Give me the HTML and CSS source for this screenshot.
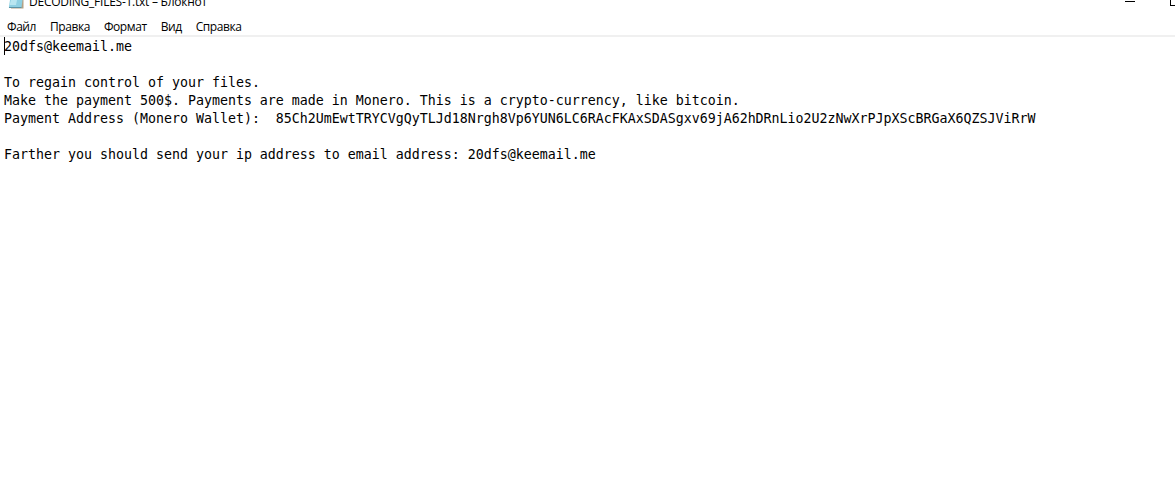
FILE: index.html
```
<!DOCTYPE html>
<html lang="ru">
<head>
    <meta charset="UTF-8">
    <title>Блокнот</title>
    <link rel="stylesheet" href="styles.css">
</head>
<body>
    <div class="window">
        <div class="titlebar">
            <svg class="icon" width="16" height="9" viewBox="0 0 16 9">
                <path d="M2 0H15.5V8.5H3Z" fill="#b5a184"/>
                <path d="M2 0H14.5L13.5 7.5H0.8Z" fill="#8fd0e2"/>
                <path d="M3 0H9L8 5H1.5Z" fill="#b9e6f0"/>
                <path d="M1 7.5H13.5" stroke="#5c93a5"/>
            </svg>
            <span class="title">DECODING_FILES-1.txt – Блокнот</span>
            <svg class="controls" width="50" height="9" viewBox="0 0 50 9" shape-rendering="crispEdges">
                <rect x="0" y="1" width="10" height="1"/>
                <path d="M45.5 0V5.5H50" fill="none" stroke="#000"/>
            </svg>
        </div>
        <div class="menu">
            <span class="item">Файл</span>
            <span class="item">Правка</span>
            <span class="item">Формат</span>
            <span class="item">Вид</span>
            <span class="item">Справка</span>
        </div>
        <pre class="text"><span class="caret"></span>20dfs@keemail.me

To regain control of your files.
Make the payment 500$. Payments are made in Monero. This is a crypto-currency, like bitcoin.
Payment Address (Monero Wallet):  85Ch2UmEwtTRYCVgQyTLJd18Nrgh8Vp6YUN6LC6RAcFKAxSDASgxv69jA62hDRnLio2U2zNwXrPJpXScBRGaX6QZSJViRrW

Farther you should send your ip address to email address: 20dfs@keemail.me</pre>
    </div>
</body>
</html>
```
FILE: styles.css
```
body { margin: 0; background: #fff; color: #000; overflow: hidden; }
.window { width: 1175px; height: 480px; overflow: hidden; }
.titlebar { display: flex; align-items: flex-start; height: 18px; font: 12px/16px "Open Sans", sans-serif; }
.icon { flex: none; margin-left: 8px; }
.title { margin: -6px 0 0 5px; white-space: nowrap; letter-spacing: -0.25px; }
.controls { flex: none; margin-left: auto; }
.menu { display: flex; gap: 14px; height: 17px; padding-left: 7px; border-bottom: 2px solid #f0f0f0; font: 12px/18px "Open Sans", sans-serif; letter-spacing: -0.43px; }
.text { position: relative; margin: 1px 0 0 4px; font: 13.295px/18px "DejaVu Sans Mono", monospace; }
.caret { position: absolute; left: 0; top: -1px; width: 1px; height: 18px; background: #000; }
```
